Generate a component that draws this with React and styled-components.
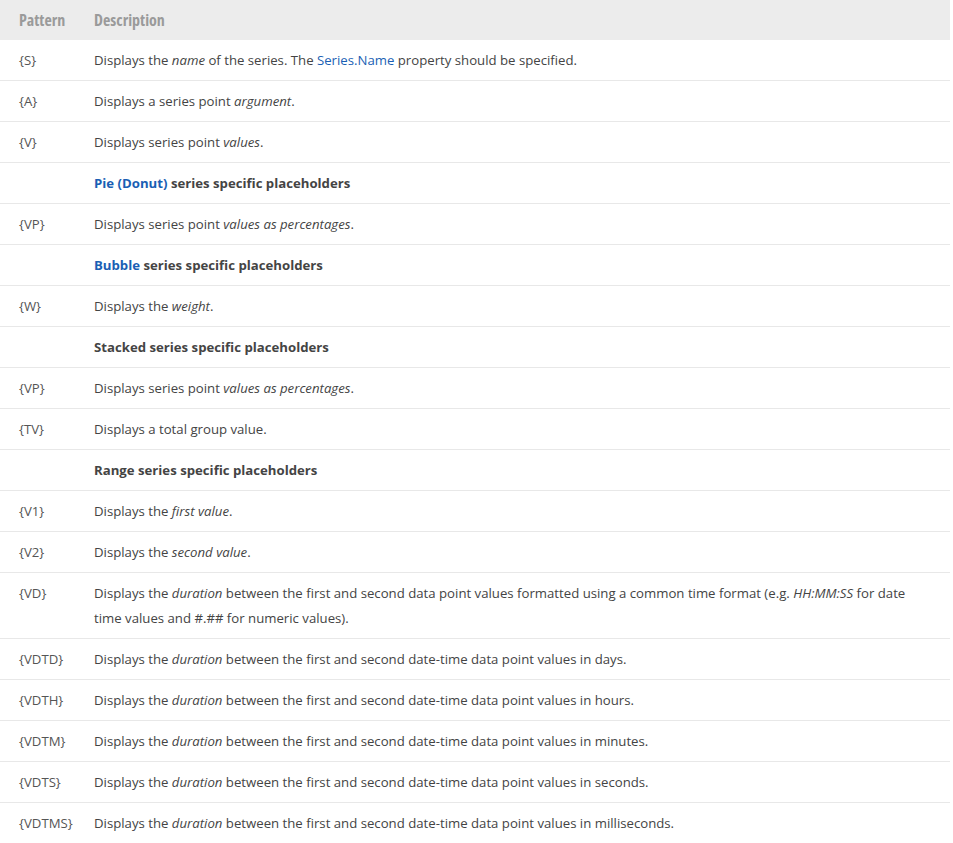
import React from 'react'
import styled, { createGlobalStyle } from 'styled-components'

const GlobalStyle = createGlobalStyle`
  html, body {
    margin: 0;
    padding: 0;
    background: #fff;
  }
  body {
    font-family: "Open Sans", "Noto Sans", sans-serif;
  }
`

const Link = styled.span`
  color: #1a5fb4;
`

const Table = styled.table`
  width: 950px;
  table-layout: fixed;
  border-collapse: collapse;
  font-size: 13.2px;
  color: #444;
`

const HeadCell = styled.th`
  background: #ececec;
  height: 40px;
  padding: 0 0 0 ${p => p.$first ? '19px' : '0'};
  line-height: 20px;
  text-align: left;
  font-family: "Open Sans", sans-serif;
  font-stretch: 75%;
  font-weight: 700;
  font-size: 16px;
  color: #9a9a9a;
`

const Row = styled.tr`
  border-bottom: 1px solid #e8e8e8;
`

const PatternCell = styled.td`
  padding: 8px 0 7px 19px;
  line-height: 25px;
  vertical-align: top;
  color: #555;
  white-space: nowrap;
`

const DescCell = styled.td`
  padding: 8px 22px 7px 0;
  line-height: 25px;
  vertical-align: top;
  i {
    font-style: italic;
  }
`

const GroupCell = styled(DescCell)`
  font-weight: 700;
  color: #444;
`

const rows = [
  { p: '{S}', d: <>Displays the <i>name</i> of the series. The <Link>Series.Name</Link> property should be specified.</> },
  { p: '{A}', d: <>Displays a series point <i>argument</i>.</> },
  { p: '{V}', d: <>Displays series point <i>values</i>.</> },
  { group: <><Link>Pie (Donut)</Link> series specific placeholders</> },
  { p: '{VP}', d: <>Displays series point <i>values as percentages</i>.</> },
  { group: <><Link>Bubble</Link> series specific placeholders</> },
  { p: '{W}', d: <>Displays the <i>weight</i>.</> },
  { group: <>Stacked series specific placeholders</> },
  { p: '{VP}', d: <>Displays series point <i>values as percentages</i>.</> },
  { p: '{TV}', d: <>Displays a total group value.</> },
  { group: <>Range series specific placeholders</> },
  { p: '{V1}', d: <>Displays the <i>first value</i>.</> },
  { p: '{V2}', d: <>Displays the <i>second value</i>.</> },
  { p: '{VD}', d: <>Displays the <i>duration</i> between the first and second data point values formatted using a common time format (e.g. <i>HH:MM:SS</i> for date time values and #.## for numeric values).</> },
  { p: '{VDTD}', d: <>Displays the <i>duration</i> between the first and second date-time data point values in days.</> },
  { p: '{VDTH}', d: <>Displays the <i>duration</i> between the first and second date-time data point values in hours.</> },
  { p: '{VDTM}', d: <>Displays the <i>duration</i> between the first and second date-time data point values in minutes.</> },
  { p: '{VDTS}', d: <>Displays the <i>duration</i> between the first and second date-time data point values in seconds.</> },
  { p: '{VDTMS}', d: <>Displays the <i>duration</i> between the first and second date-time data point values in milliseconds.</> },
]

function App() {
  return (
    <>
      <GlobalStyle />
      <Table>
        <colgroup>
          <col style={{ width: 94 }} />
          <col />
        </colgroup>
        <thead>
          <tr>
            <HeadCell $first>Pattern</HeadCell>
            <HeadCell>Description</HeadCell>
          </tr>
        </thead>
        <tbody>
          {rows.map((r, i) => (
            <Row key={i}>
              <PatternCell>{r.p || ''}</PatternCell>
              {r.group
                ? <GroupCell>{r.group}</GroupCell>
                : <DescCell>{r.d}</DescCell>}
            </Row>
          ))}
        </tbody>
      </Table>
    </>
  )
}

export default App
